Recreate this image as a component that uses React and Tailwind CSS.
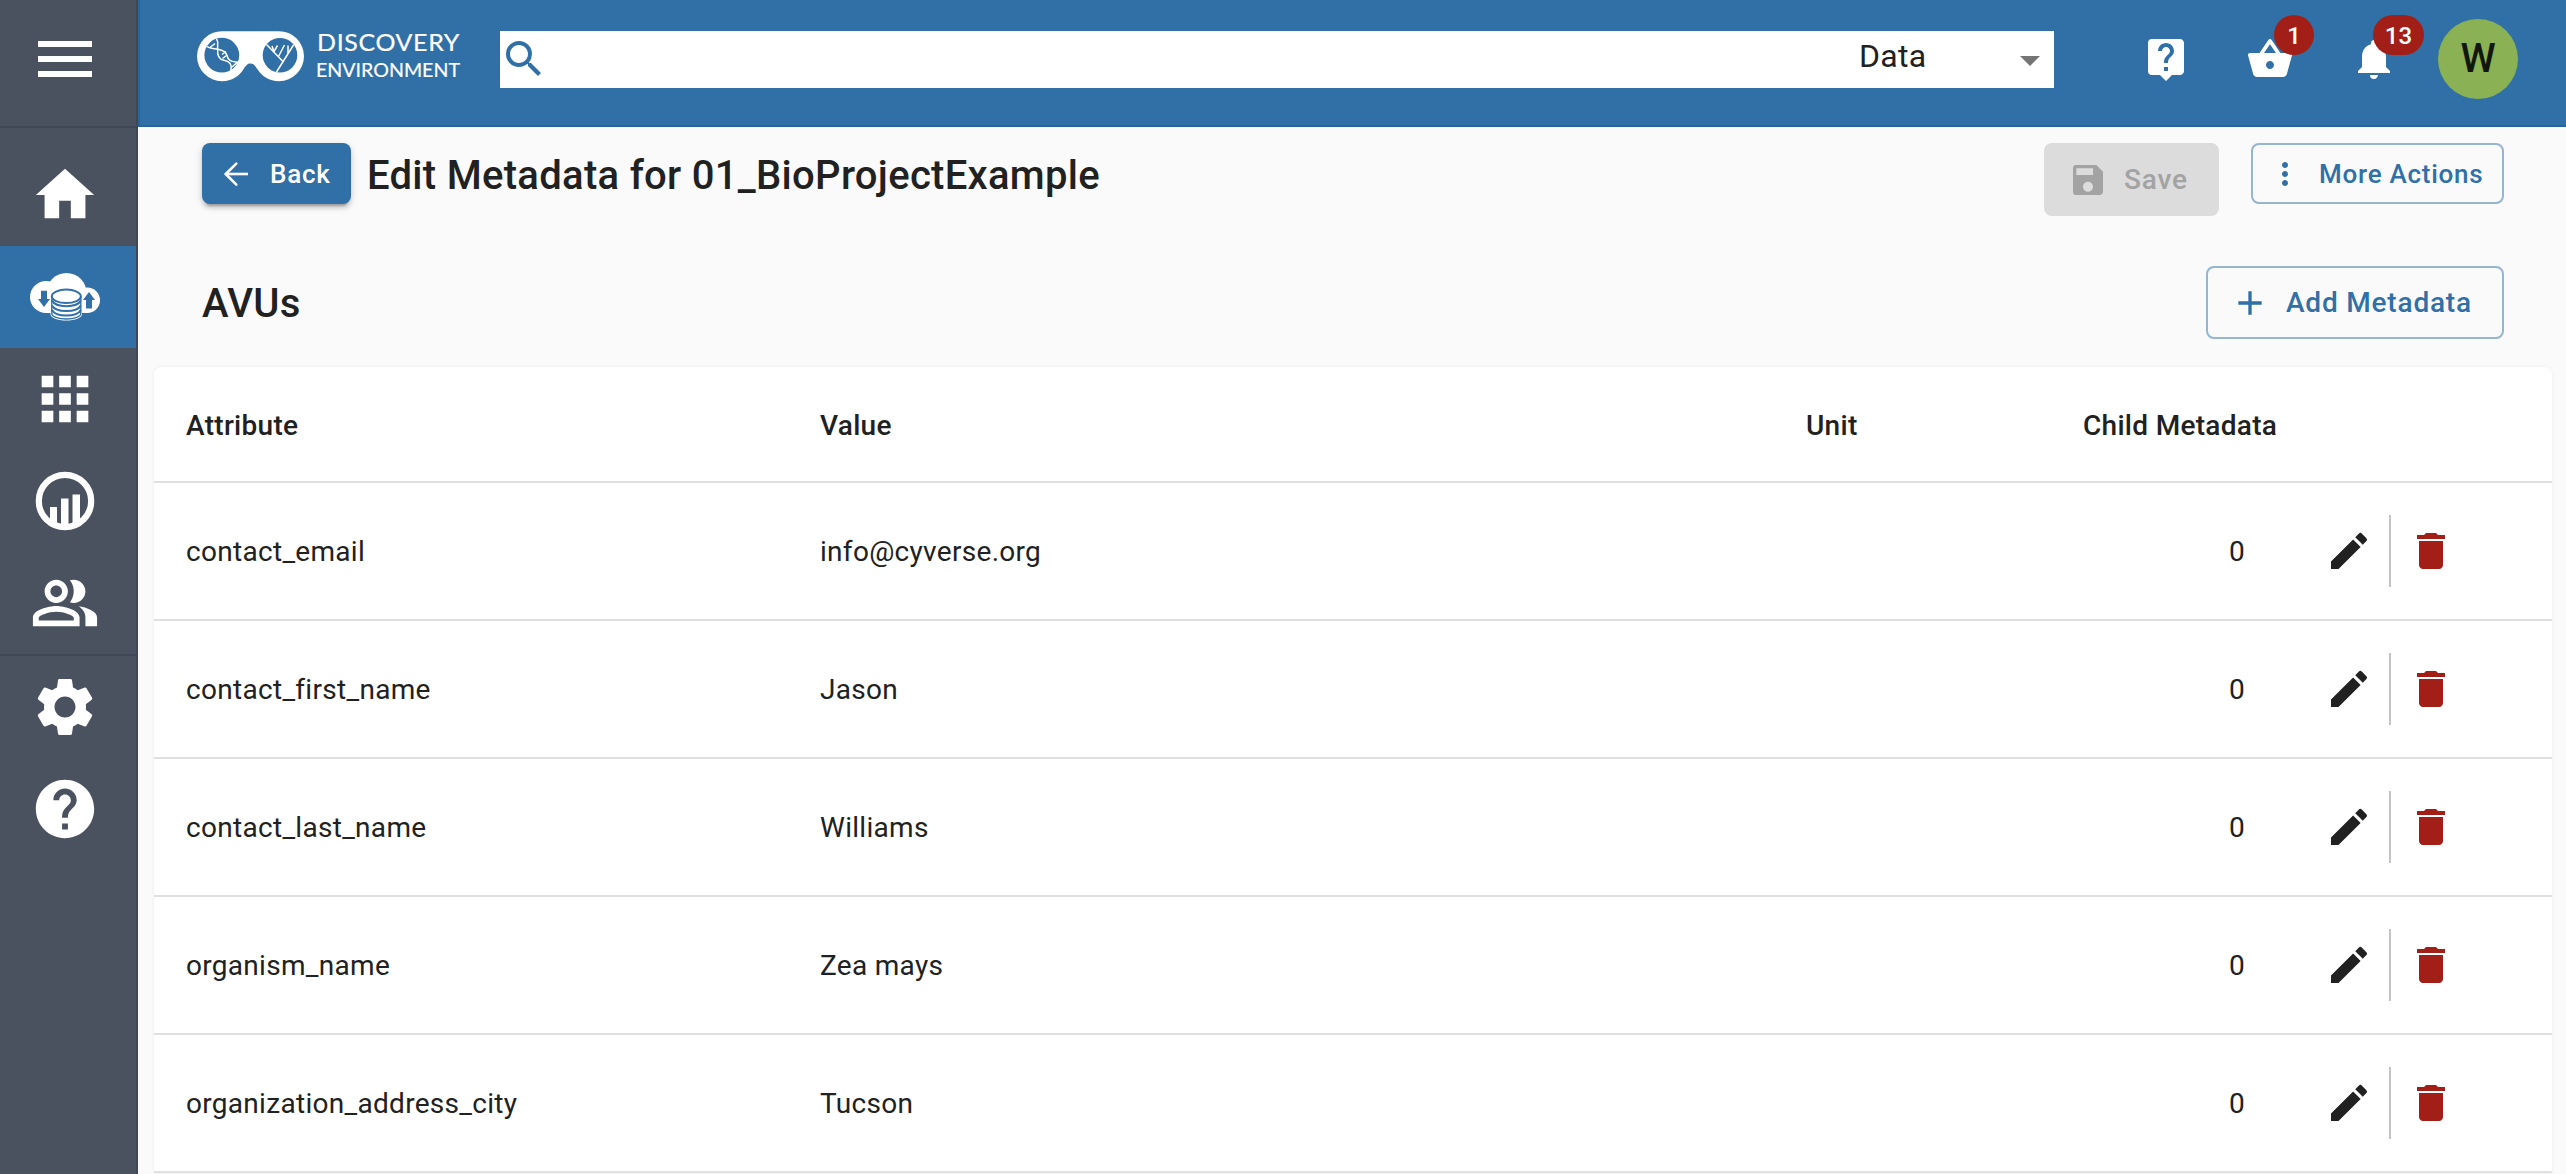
import { MdMenu, MdHome, MdApps, MdOutlinePeopleAlt, MdSettings, MdHelp, MdSearch, MdArrowDropDown, MdLiveHelp, MdShoppingBasket, MdNotifications, MdSave, MdMoreVert, MdAdd, MdEdit, MdDelete } from "react-icons/md";

const rows = [
  ["contact_email", "info@cyverse.org"],
  ["contact_first_name", "Jason"],
  ["contact_last_name", "Williams"],
  ["organism_name", "Zea mays"],
  ["organization_address_city", "Tucson"],
];

const GRID = "grid grid-cols-[634px_986px_277px_162px_339px]";

function DataIcon() {
  return (
    <svg width="70" height="48" viewBox="0 0 70 48">
      <g fill="#fff">
        <circle cx="16" cy="24" r="16" />
        <circle cx="36.500" cy="20" r="20" />
        <circle cx="57.200" cy="27.200" r="12.800" />
        <rect x="16" y="24" width="42" height="16" />
      </g>
      <path d="M20.500 22v19c0 4 7 6.500 15.700 6.500S52 45 52 41V22z" fill="#fff" />
      <g fill="none" stroke="#3070a7" strokeWidth="2">
        <ellipse cx="36.300" cy="23.300" rx="14.500" ry="6.700" />
        <path d="M21.800 23v17.500c0 3 6 5.500 14.500 5.500s14.500-2.500 14.500-5.500V23" strokeWidth="1.400" />
        <path d="M22 27.500c2 4 8 5.700 14.300 5.700s12.500-1.700 14.500-5.700M22 32.500c2 4 8 5.500 14.300 5.500s12.500-1.500 14.500-5.500M22 37c2 4 8 5.500 14.300 5.500s12.500-1.500 14.500-5.500" />
      </g>
      <path d="M11 17.700h6v8.300h3L14 34l-6-8h3zM56 35.500h6V27h3l-6-8-6 8h3z" fill="#3070a7" />
    </svg>
  );
}

function AnalysesIcon() {
  return (
    <svg width="60" height="60" viewBox="0 0 60 60">
      <circle cx="30" cy="30" r="26.200" fill="none" stroke="#fff" strokeWidth="6.200" />
      <path d="M15 36h7v17l-7-4zM26 27.500h7.500V54H26zM37.500 23.500H45V49l-7.500 4z" fill="#fff" />
    </svg>
  );
}

function BackArrow() {
  return (
    <svg width="36" height="36" viewBox="0 0 36 36" fill="none" stroke="#fff" strokeWidth="2.600" strokeLinecap="round" className="mr-4">
      <path d="M18.300 7.600L7.700 18l10.600 10.600" />
      <path d="M8 18h22" strokeLinecap="butt" />
    </svg>
  );
}

function Logo() {
  return (
    <svg width="270" height="68" viewBox="0 -8 270 68">
      <path d="M25 0.200H82A25 25 0 0 1 82 50.200C72 50.200 65 45 61 39C58 34.500 56.500 32.600 53.500 32.600S49 34.500 46 39C42 45 35 50.200 25 50.200A25 25 0 0 1 25 0.200z" fill="#fff" />
      <circle cx="24.800" cy="24.200" r="17.400" fill="#3070a7" />
      <circle cx="83" cy="24.200" r="17.300" fill="#3070a7" />
      <g fill="none" stroke="#fff" strokeWidth="1.500">
        <path d="M10 15.500C13 18 17 17.500 20.700 18.300S29 20 30 24.500S33 31 42 31.300" />
        <path d="M19.500 7.500C22 12 20 15 20.700 18.300C20 25 23 28.500 27 29.300S36 32 33.500 41" />
        <path d="M13 16.500l5-4M25 23.500l4-3M25.500 27.500l4-3M35 36l5-4.500" />
        <path d="M69.500 13.500L85.500 30M96.500 14L79.500 41M77 20.500l3.500-6M77 20.500l-2-5.500M81.500 25.500l6-11.500M91 23V14.500" />
      </g>
      <g fill="#fff" stroke="#fff" strokeWidth="0.200" fontFamily="Lato, sans-serif">
        <text x="120" y="19.500" textLength="143" lengthAdjust="spacingAndGlyphs" fontSize="23" letterSpacing="0.600">DISCOVERY</text>
        <text x="119" y="45.700" textLength="144" lengthAdjust="spacingAndGlyphs" fontSize="19">ENVIRONMENT</text>
      </g>
    </svg>
  );
}

function NavItem({ active, children }) {
  return (
    <div className={(active ? "bg-[#3070a7] " : "") + "flex h-[102px] w-[136px] items-center justify-center pr-[6px] text-white"}>
      {children}
    </div>
  );
}

function Sidebar() {
  return (
    <aside className="flex w-[138px] shrink-0 flex-col border-r-2 border-[#404756] bg-[#4a515f] text-white">
      <div className="flex h-32 items-center justify-center border-b-2 border-[#404756] pr-[6px] pb-[8px]">
        <MdMenu size={72} />
      </div>
      <nav className="border-b-2 border-[#404756] pt-4">
        <NavItem><MdHome size={70} /></NavItem>
        <NavItem active><DataIcon /></NavItem>
        <NavItem><MdApps size={70} /></NavItem>
        <NavItem><AnalysesIcon /></NavItem>
        <NavItem><MdOutlinePeopleAlt size={70} /></NavItem>
      </nav>
      <NavItem><MdSettings size={70} /></NavItem>
      <NavItem><MdHelp size={70} /></NavItem>
    </aside>
  );
}

function Header() {
  return (
    <header className="flex h-[127px] items-start border-b-2 border-l-2 border-[#2b6496] bg-[#3070a7] pr-12 pl-[57px] text-white">
      <div className="mt-[23px] w-[303px]"><Logo /></div>
      <div className="mt-[31px] flex h-[57px] w-[1554px] items-start bg-white">
        <MdSearch size={48} className="mt-1 text-[#3070a7]" />
        <span className="ml-auto w-[147px] text-[32px] leading-[50px] tracking-[0.3px] text-[#212121]">Data</span>
        <MdArrowDropDown size={48} className="mt-[5px] text-[#757575]" />
      </div>
      <div className="mt-[35px] ml-[88px] flex">
        <MdLiveHelp size={48} />
        <div className="relative ml-14">
          <MdShoppingBasket size={48} />
          <span className="absolute -top-5 left-7 flex h-10 w-10 items-center justify-center rounded-full bg-[#a11f16] pt-0.5 text-2xl font-medium">1</span>
        </div>
        <div className="relative ml-14">
          <MdNotifications size={48} />
          <span className="absolute -top-5 left-[23px] flex h-10 w-[51px] items-center justify-center rounded-full bg-[#a11f16] pt-0.5 text-2xl font-medium">13</span>
        </div>
      </div>
      <div className="mt-[19px] ml-10 flex h-20 w-20 items-center justify-center rounded-full bg-[#8ab153] text-[40px] font-medium text-[#12170b]">W</div>
    </header>
  );
}

export default function App() {
  return (
    <div className="flex h-[1174px] w-[2566px] overflow-hidden bg-[#fafafa] font-['Roboto',sans-serif] text-[#212121]">
      <Sidebar />
      <div className="flex min-w-0 flex-1 flex-col">
        <Header />
        <main className="flex flex-col">
          <div className="mt-4 flex items-start pr-[62px] pl-16">
            <button className="flex h-[61px] w-[149px] items-center rounded-lg bg-[#3070a7] pl-4 text-[26px] font-medium tracking-[0.743px] text-white shadow-[0_6px_2px_-4px_rgba(0,0,0,0.2),0_4px_4px_0_rgba(0,0,0,0.14),0_2px_10px_0_rgba(0,0,0,0.12)]">
              <BackArrow /><span className="pt-0.5">Back</span>
            </button>
            <h1 className="ml-4 pt-px text-[40px] leading-[64px] font-medium tracking-[0.3px]">Edit Metadata for 01_BioProjectExample</h1>
            <button className="ml-auto flex h-[73px] w-[175px] items-center rounded-lg bg-[#dcdcdc] pl-6 text-[28px] font-medium tracking-[0.8px] text-[#a3a3a3]">
              <MdSave size={40} className="mr-4" />Save
            </button>
            <button className="ml-8 flex h-[61px] w-[253px] items-center rounded-lg border-2 border-[#3070a7]/50 pl-[14px] text-[26px] font-medium tracking-[0.743px] whitespace-nowrap text-[#3070a7]">
              <MdMoreVert size={36} className="mr-4" /><span className="pt-0.5">More Actions</span>
            </button>
          </div>
          <div className="mt-[50px] flex items-center pr-[62px] pl-16">
            <h2 className="pt-0.5 text-[40px] leading-[64px] font-medium tracking-[0.3px]">AVUs</h2>
            <button className="ml-auto flex h-[73px] w-[298px] items-center rounded-lg border-2 border-[#3070a7]/50 pl-[22px] text-[28px] font-medium tracking-[0.8px] whitespace-nowrap text-[#3070a7]">
              <MdAdd size={40} className="mr-4" />Add Metadata
            </button>
          </div>
          <section className="mt-7 ml-4 w-[2398px] rounded-t-lg bg-white text-[28px] tracking-[0.3px] shadow-[0_0_4px_rgba(0,0,0,0.06)]">
            <div className={GRID + " h-[116px] items-center border-b-2 border-[#e0e0e0] pt-[3px] pl-8 font-medium"}>
              <span>Attribute</span>
              <span>Value</span>
              <span>Unit</span>
              <span className="whitespace-nowrap">Child Metadata</span>
            </div>
            {rows.map(([name, value]) => (
              <div key={name} className={GRID + " h-[138px] items-center border-b-2 border-[#e0e0e0] pl-8"}>
                <span className="pt-0.5">{name}</span>
                <span className="pt-0.5">{value}</span>
                <span />
                <span className="pt-0.5 text-right">0</span>
                <div className="flex items-center pl-20">
                  <MdEdit size={48} />
                  <span className="mr-4 ml-4 h-[72px] w-0.5 bg-[#c4c4c4]" />
                  <MdDelete size={48} className="text-[#a11f16]" />
                </div>
              </div>
            ))}
          </section>
        </main>
      </div>
    </div>
  );
}
